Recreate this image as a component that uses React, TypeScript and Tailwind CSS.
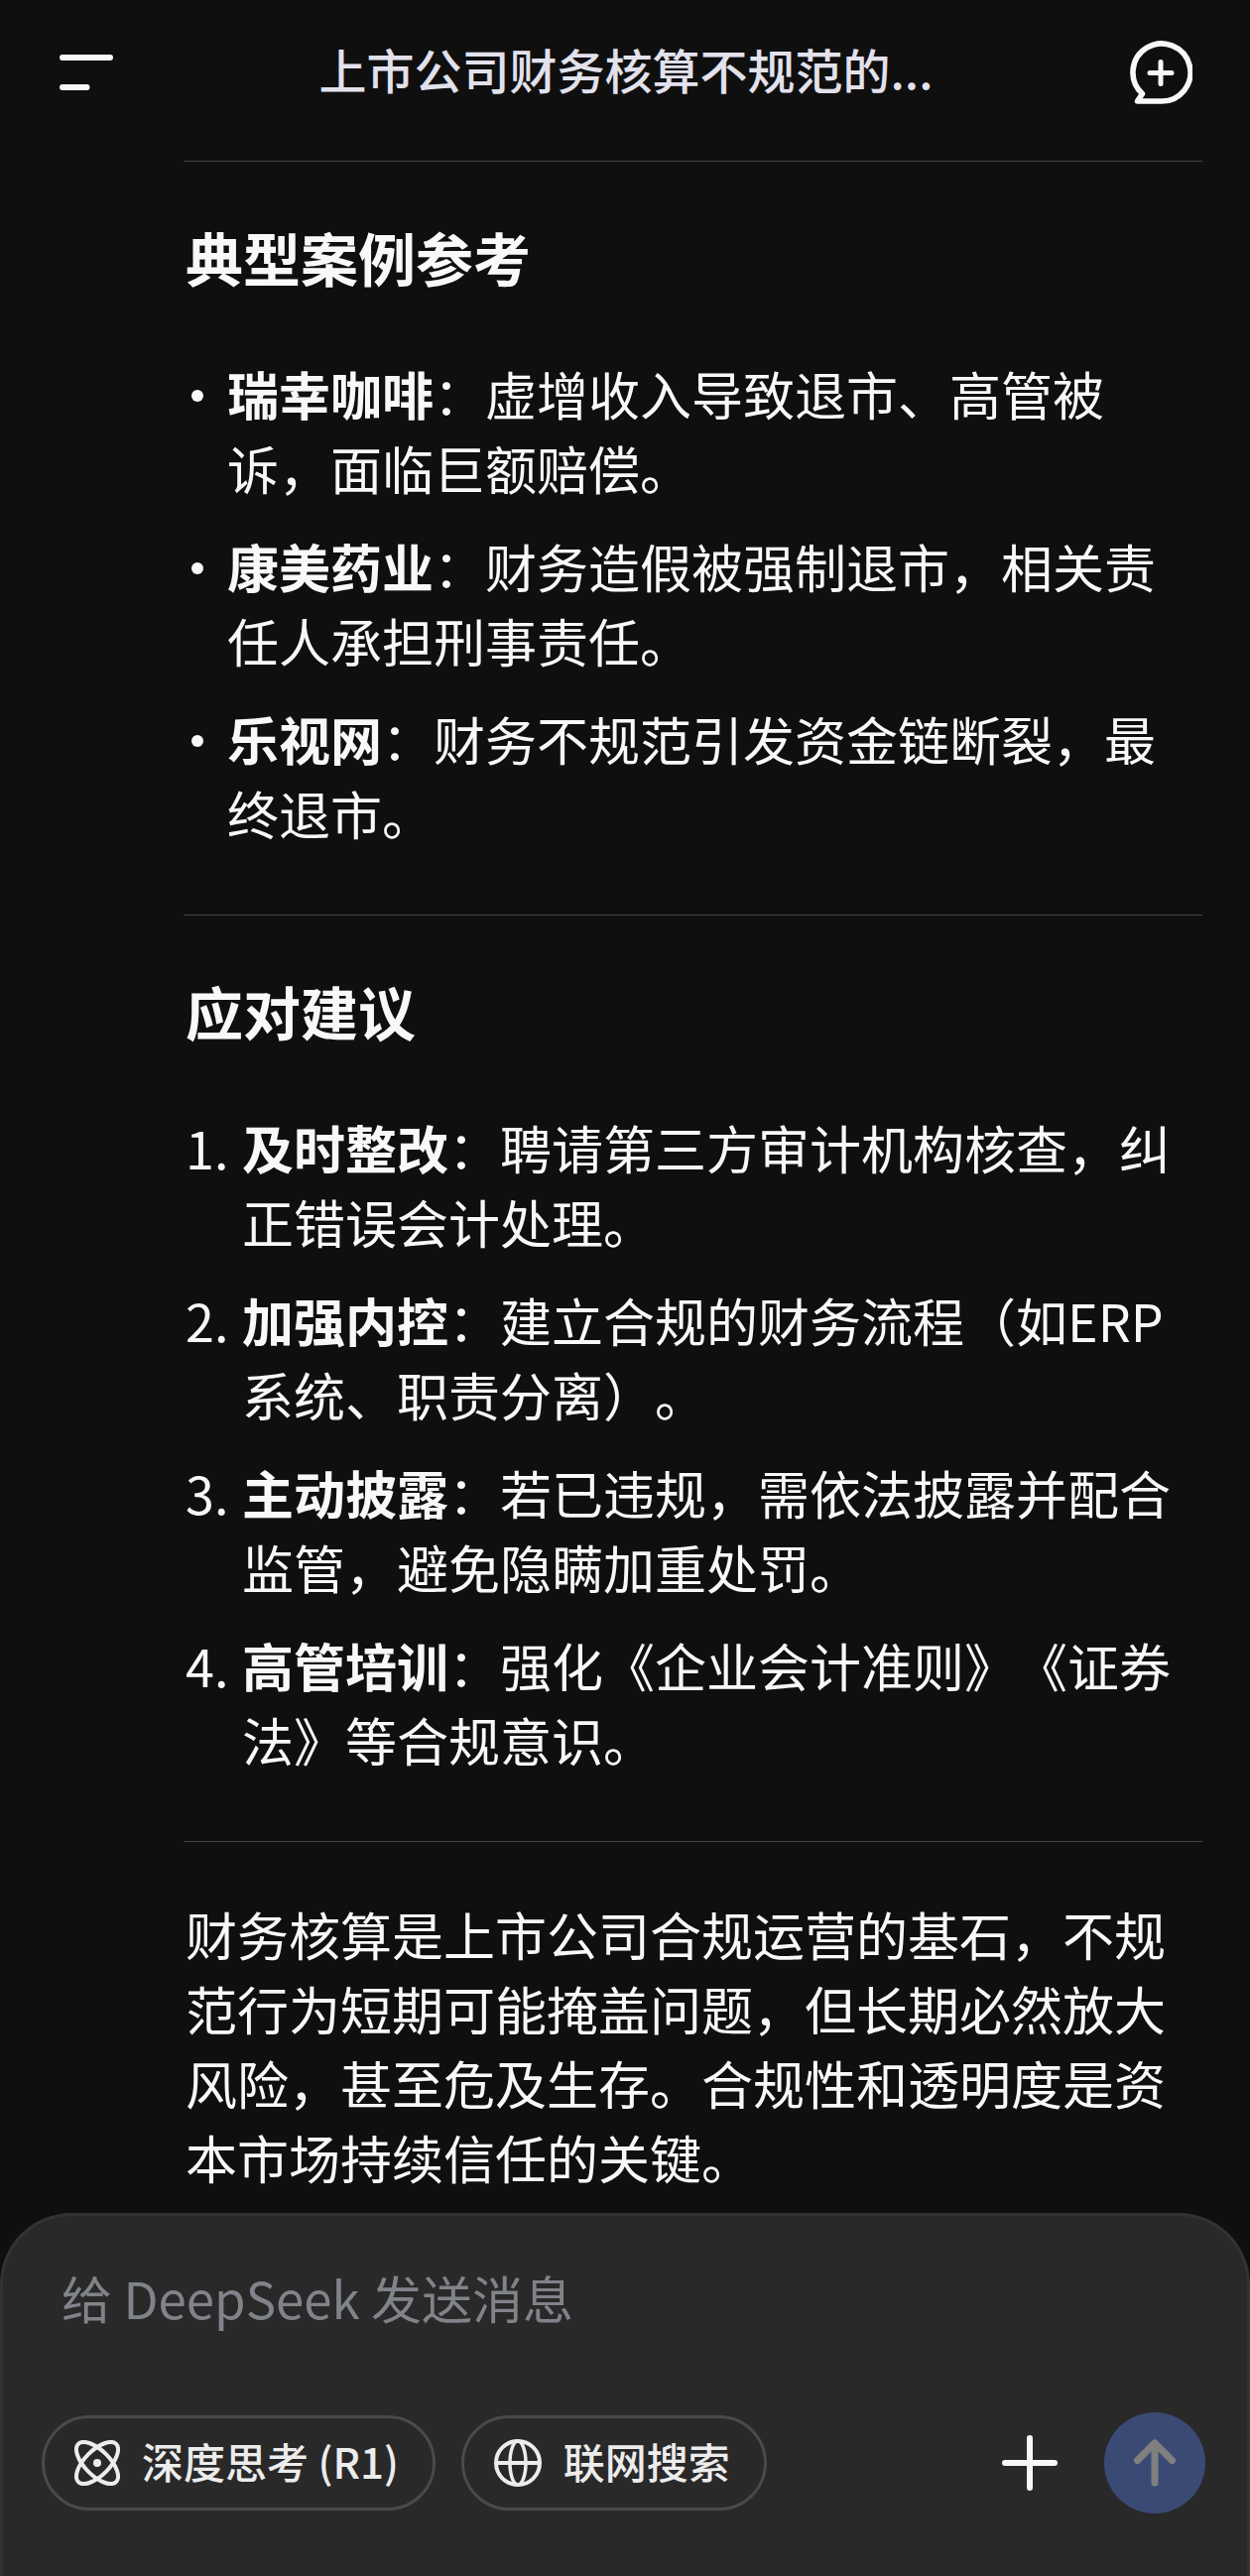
import { useState } from 'react';
import type { ReactNode } from 'react';

type CaseItem = {
  label: string;
  text: string;
};

const cases: CaseItem[] = [
  { label: '瑞幸咖啡', text: '虚增收入导致退市、高管被诉，面临巨额赔偿。' },
  { label: '康美药业', text: '财务造假被强制退市，相关责任人承担刑事责任。' },
  { label: '乐视网', text: '财务不规范引发资金链断裂，最终退市。' },
];

const suggestions: CaseItem[] = [
  { label: '及时整改', text: '聘请第三方审计机构核查，纠正错误会计处理。' },
  { label: '加强内控', text: '建立合规的财务流程（如ERP系统、职责分离）。' },
  { label: '主动披露', text: '若已违规，需依法披露并配合监管，避免隐瞒加重处罚。' },
  { label: '高管培训', text: '强化《企业会计准则》《证券法》等合规意识。' },
];

function MenuIcon() {
  return (
    <svg className="h-9 w-[54px]" viewBox="0 0 54 36" fill="none" stroke="currentColor" strokeWidth="6" strokeLinecap="round">
      <path d="M3 3h48M3 33h24.500" />
    </svg>
  );
}

function NewChatIcon() {
  return (
    <svg className="size-16" viewBox="0 0 64 64" fill="none" stroke="currentColor" strokeWidth="5.6" strokeLinecap="round" strokeLinejoin="round">
      <path d="M32 61H8.500L13.500 53.500A29 29 0 1 1 32 61Z" />
      <path d="M32 21.500v22M21 32.500h22" strokeWidth="5" />
    </svg>
  );
}

function AtomIcon() {
  return (
    <svg className="size-[46px]" viewBox="0 0 46 46" fill="none" stroke="currentColor" strokeWidth="4">
      <ellipse cx="23" cy="23" rx="27" ry="12.500" transform="rotate(45 23 23)" />
      <ellipse cx="23" cy="23" rx="27" ry="12.500" transform="rotate(-45 23 23)" />
      <circle cx="23" cy="23" r="4" fill="currentColor" stroke="none" />
    </svg>
  );
}

function GlobeIcon() {
  return (
    <svg className="size-12" viewBox="0 0 48 48" fill="none" stroke="currentColor" strokeWidth="4">
      <circle cx="24" cy="24" r="22" />
      <ellipse cx="24" cy="24" rx="8" ry="22" strokeWidth="3.500" />
      <path d="M2 24h44" />
    </svg>
  );
}

function PlusIcon() {
  return (
    <svg className="size-14" viewBox="0 0 56 56" fill="none" stroke="currentColor" strokeWidth="6" strokeLinecap="round">
      <path d="M28 3v50M3 28h50" />
    </svg>
  );
}

function ArrowUpIcon() {
  return (
    <svg className="h-12 w-[42px]" viewBox="0 0 42 48" fill="none" stroke="currentColor" strokeWidth="7" strokeLinecap="round" strokeLinejoin="round">
      <path d="M21 44V4M3.500 21.500L21 4l17.500 17.500" />
    </svg>
  );
}

function Divider() {
  return <hr className="border-t border-[#454545]" />;
}

function Heading({ children }: { children: ReactNode }) {
  return <h3 className="text-[58px] leading-[76px] font-bold">{children}</h3>;
}

function ListItem({ marker, item }: { marker: ReactNode; item: CaseItem }) {
  return (
    <li className="flex">
      {marker}
      <p className="min-w-0 flex-1">
        <strong className="font-bold">{item.label}</strong>：{item.text}
      </p>
    </li>
  );
}

type ToggleButtonProps = {
  icon: ReactNode;
  active: boolean;
  onClick: () => void;
  children: ReactNode;
};

function ToggleButton({ icon, active, onClick, children }: ToggleButtonProps) {
  return (
    <button
      type="button"
      aria-pressed={active}
      onClick={onClick}
      className="flex h-24 items-center gap-[22px] rounded-full border-3 border-[#4a4a4a] pr-[34px] pl-[30px] text-[42px] leading-[60px] font-medium whitespace-nowrap text-[#ececec]"
    >
      {icon}
      <span className="pb-1">{children}</span>
    </button>
  );
}

export default function App() {
  const [message, setMessage] = useState('');
  const [deepThink, setDeepThink] = useState(false);
  const [webSearch, setWebSearch] = useState(false);

  return (
    <div
      lang="zh-CN"
      className="flex min-h-screen flex-col bg-[#0f0f0f] font-['Noto_Sans_CJK_SC',sans-serif] text-[#f8f8f8] [text-spacing-trim:space-all]"
    >
      <header className="flex items-center justify-between pt-[41px] pr-[58px] pl-[60px]">
        <button type="button" aria-label="菜单" className="w-16">
          <MenuIcon />
        </button>
        <h1 className="pb-2 text-[48px] leading-[56px] font-medium text-[#e2e1ec]">上市公司财务核算不规范的...</h1>
        <button type="button" aria-label="新对话">
          <NewChatIcon />
        </button>
      </header>

      <main className="flex-1 pt-[57px] pr-12 pb-[19px] pl-[185px] text-[52px] leading-[75px]">
        <Divider />
        <section className="px-0.5 pt-[58px] pb-[65px]">
          <Heading>典型案例参考</Heading>
          <ul className="mt-[62px] space-y-6">
            {cases.map((item) => (
              <ListItem
                key={item.label}
                item={item}
                marker={
                  <span className="flex h-[75px] w-[42px] items-center pt-1 pl-1.5">
                    <span className="size-3 rounded-full bg-current" />
                  </span>
                }
              />
            ))}
          </ul>
        </section>
        <Divider />
        <section className="px-0.5 pt-[58px] pb-[65px]">
          <Heading>应对建议</Heading>
          <ol className="mt-[62px] space-y-6">
            {suggestions.map((item, index) => (
              <ListItem
                key={item.label}
                item={item}
                marker={<span className="w-[57px]">{index + 1}.</span>}
              />
            ))}
          </ol>
        </section>
        <Divider />
        <p className="px-0.5 pt-[55px]">
          财务核算是上市公司合规运营的基石，不规范行为短期可能掩盖问题，但长期必然放大风险，甚至危及生存。合规性和透明度是资本市场持续信任的关键。
        </p>
      </main>

      <form
        onSubmit={(e) => e.preventDefault()}
        className="rounded-t-[72px] border-x-3 border-t-3 border-[#333333] bg-[#292929] pt-[42px] pr-[42px] pb-[63px] pl-[39px]"
      >
        <input
          type="text"
          aria-label="消息"
          value={message}
          onChange={(e) => setMessage(e.target.value)}
          placeholder="给 DeepSeek 发送消息"
          className="block h-20 w-full bg-transparent px-5 text-[51px] outline-none placeholder:text-[#808389]"
        />
        <div className="mt-[76px] flex items-center">
          <div className="flex flex-1 gap-[26px]">
            <ToggleButton icon={<AtomIcon />} active={deepThink} onClick={() => setDeepThink(!deepThink)}>
              深度思考 (R1)
            </ToggleButton>
            <ToggleButton icon={<GlobeIcon />} active={webSearch} onClick={() => setWebSearch(!webSearch)}>
              联网搜索
            </ToggleButton>
          </div>
          <button type="button" aria-label="添加附件" className="mr-[47px]">
            <PlusIcon />
          </button>
          <button
            type="submit"
            aria-label="发送"
            className="flex size-[102px] items-center justify-center rounded-full bg-[#3b4a75] text-[#808080]"
          >
            <ArrowUpIcon />
          </button>
        </div>
      </form>
    </div>
  );
}
